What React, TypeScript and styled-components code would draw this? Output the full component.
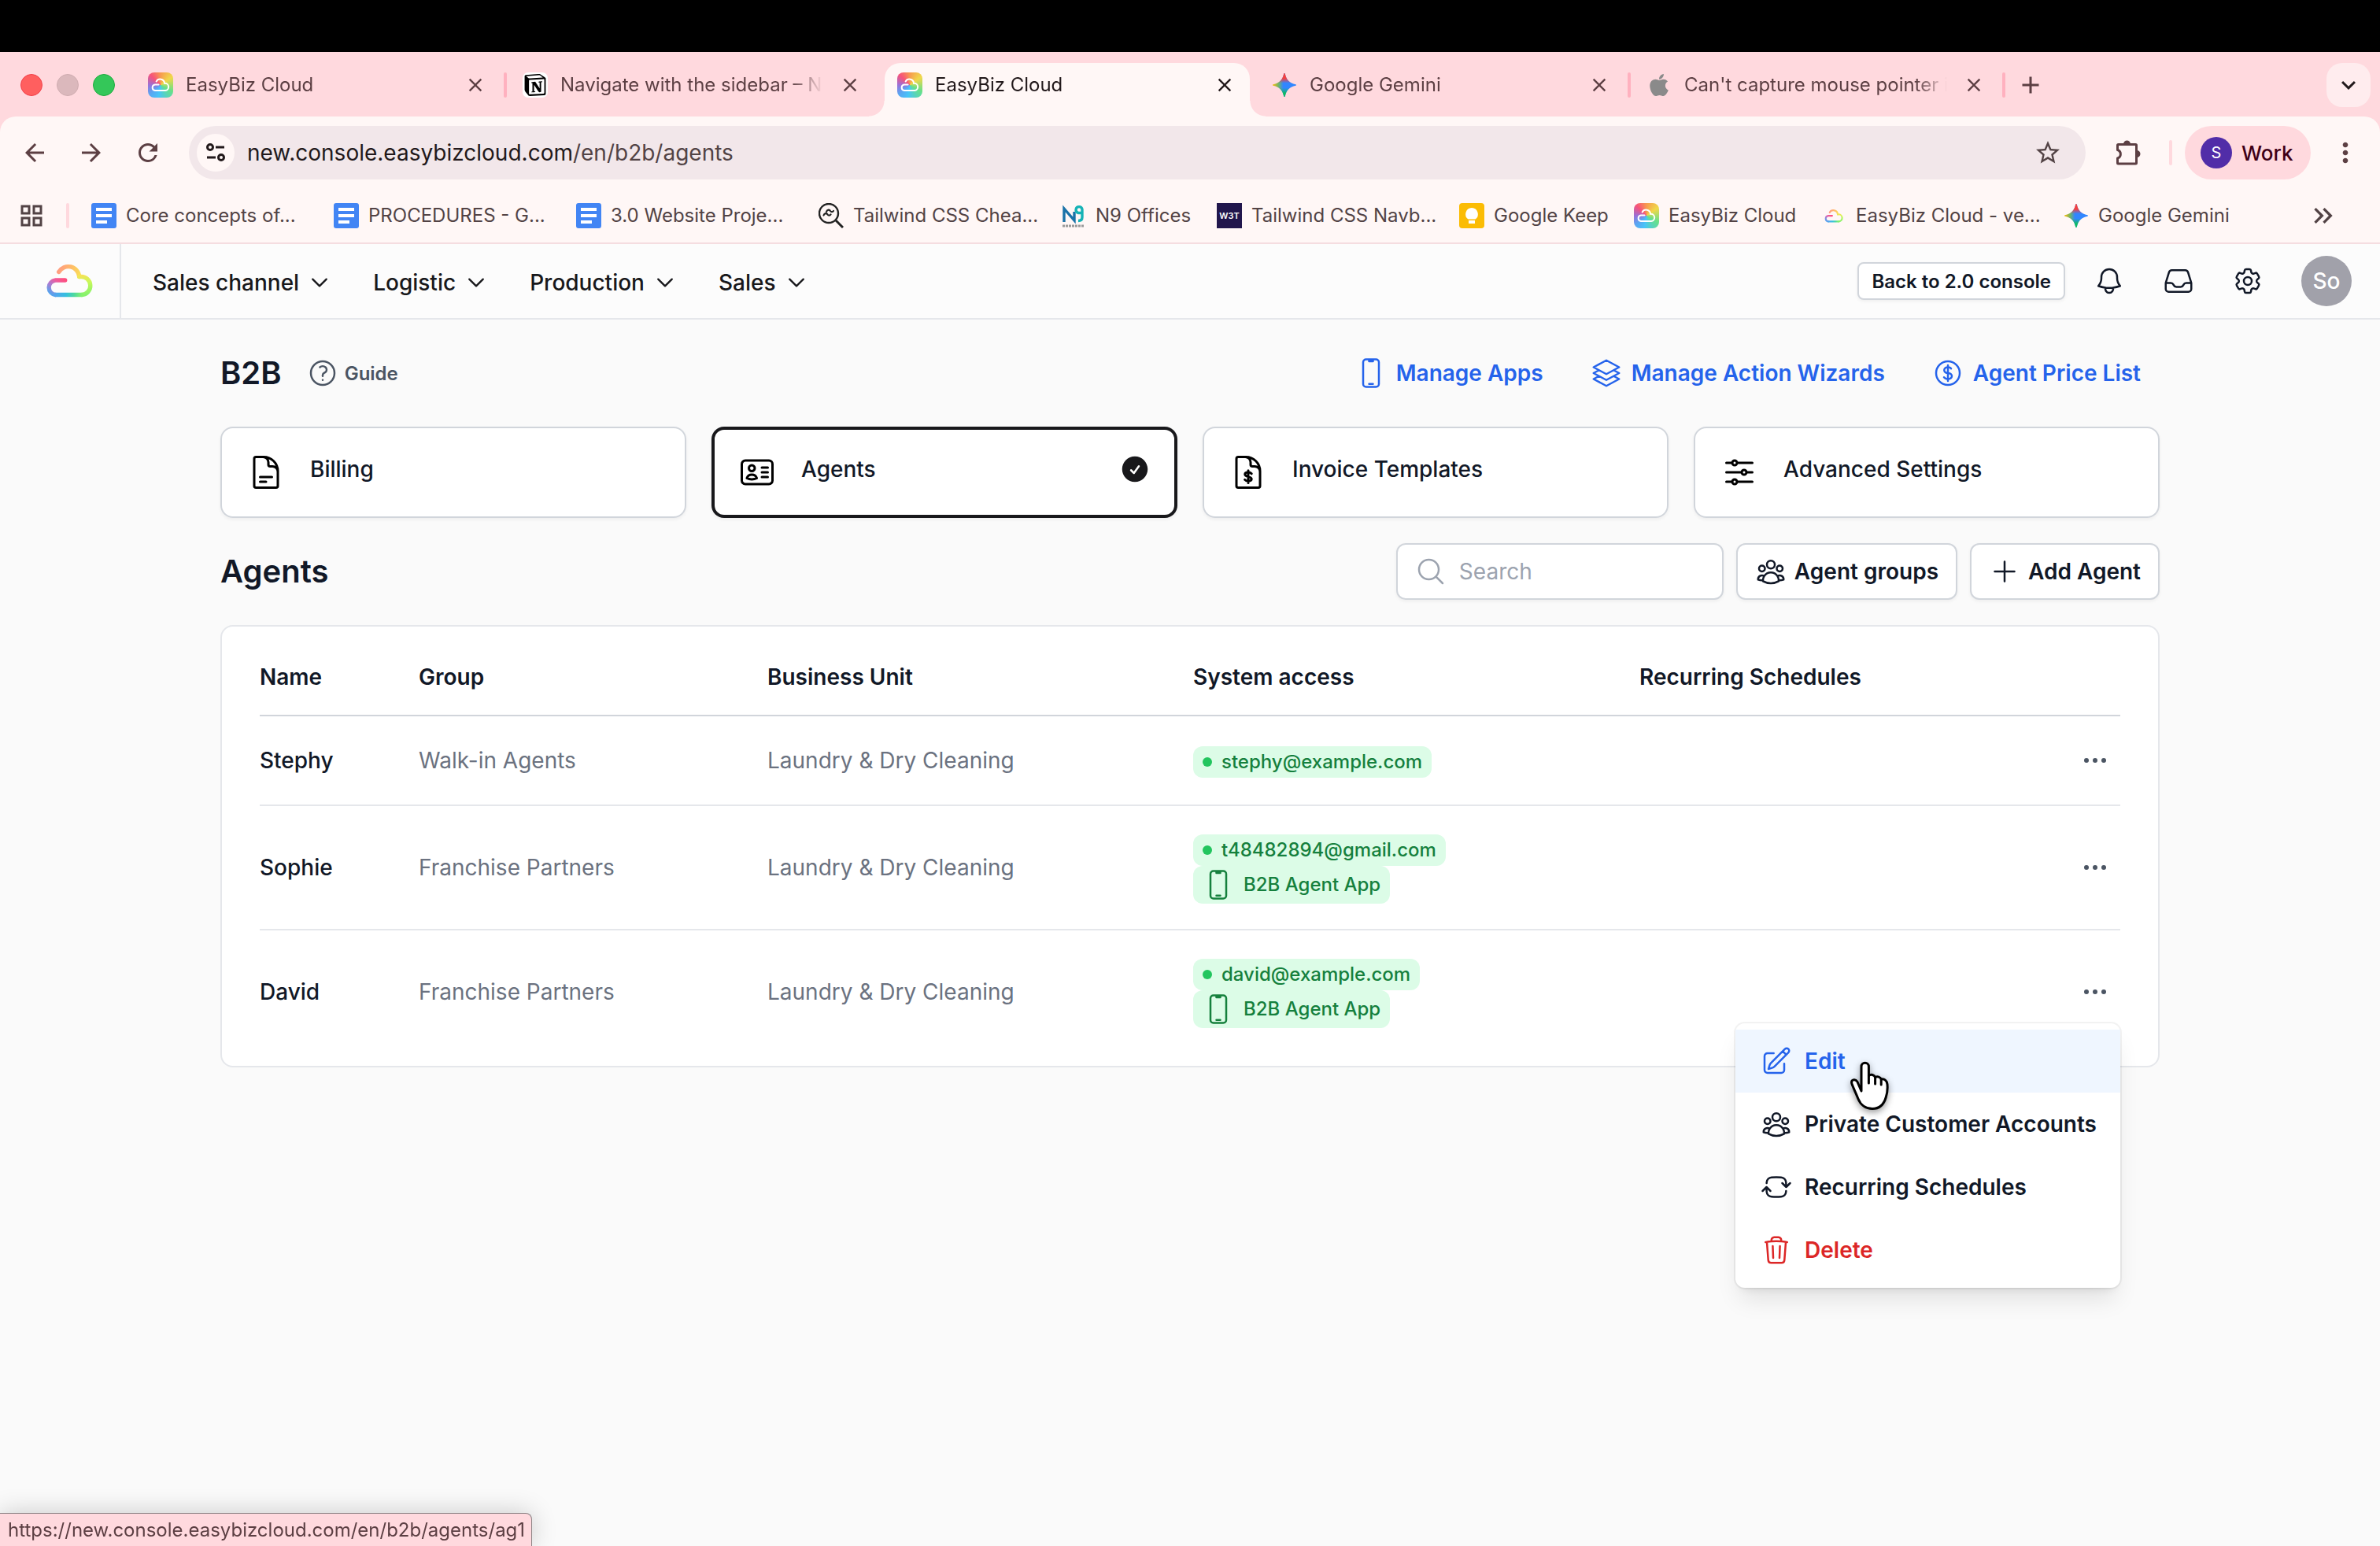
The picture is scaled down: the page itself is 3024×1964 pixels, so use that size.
import React from 'react';
import styled, { createGlobalStyle, css } from 'styled-components';
import {
  HiCheckCircle,
  HiOutlineAdjustmentsHorizontal,
  HiOutlineArrowPathRoundedSquare,
  HiOutlineBell,
  HiOutlineChevronDown,
  HiOutlineCog6Tooth,
  HiOutlineCurrencyDollar,
  HiOutlineDevicePhoneMobile,
  HiOutlineDocumentText,
  HiOutlineIdentification,
  HiOutlineInbox,
  HiOutlineMagnifyingGlass,
  HiOutlinePencilSquare,
  HiOutlinePlus,
  HiOutlineQuestionMarkCircle,
  HiOutlineSquare3Stack3D,
  HiOutlineTrash,
  HiOutlineUserGroup,
} from 'react-icons/hi2';
import {
  MdAdd,
  MdArrowBack,
  MdArrowForward,
  MdClose,
  MdKeyboardArrowDown,
  MdKeyboardDoubleArrowRight,
  MdMoreVert,
  MdOutlineGridView,
  MdRefresh,
  MdStarBorder,
} from 'react-icons/md';
import { FaApple } from 'react-icons/fa';
import { SiNotion } from 'react-icons/si';

const color = {
  strip: '#ffd9de',
  toolbar: '#fff7f6',
  field: '#f2e7ea',
  tabText: '#5c3f43',
  chromeText: '#524345',
  chromeInk: '#22191b',
  ink: '#111827',
  muted: '#6b7280',
  line: '#e5e7eb',
  border: '#d1d5db',
  blue: '#2563eb',
  red: '#dc2626',
  green: '#15803d',
};

const GlobalStyle = createGlobalStyle`
  *, *::before, *::after { box-sizing: border-box; }
  body {
    margin: 0;
    background: #fafafa;
    font-family: Inter, "Liberation Sans", sans-serif;
    -webkit-font-smoothing: antialiased;
  }
  button, input { font: inherit; color: inherit; }
  button { border: 0; padding: 0; background: none; cursor: pointer; }
  a { color: inherit; text-decoration: none; }
  svg { flex: none; display: block; }
`;

/* ---------- browser frame ---------- */

const Screen = styled.div`
  display: flex;
  flex-direction: column;
  min-height: 100vh;
`;

const MenuBarGap = styled.div`
  height: 66px;
  background: #000;
`;

const Browser = styled.div`
  background: ${color.strip};
`;

const TabStrip = styled.div`
  display: flex;
  align-items: flex-end;
  height: 82px;
  padding: 0 12px 0 26px;
`;

const Lights = styled.div`
  display: flex;
  gap: 18px;
  align-items: center;
  height: 68px;
  padding-bottom: 12px;
  margin-right: 26px;
`;

const Light = styled.span<{ $fill: string; $edge: string }>`
  width: 28px;
  height: 28px;
  border-radius: 50%;
  background: ${(p) => p.$fill};
  border: 1px solid ${(p) => p.$edge};
`;

const Tab = styled.div<{ $active?: boolean }>`
  position: relative;
  display: flex;
  align-items: center;
  gap: 16px;
  width: 464px;
  height: 68px;
  padding: 0 18px 12px 16px;
  color: ${color.tabText};
  ${(p) =>
    p.$active &&
    css`
      color: ${color.chromeInk};
      background: ${color.toolbar};
      border-radius: 20px 20px 0 0;
      &::before,
      &::after {
        content: '';
        position: absolute;
        bottom: 0;
        width: 20px;
        height: 20px;
      }
      &::before {
        left: -20px;
        background: radial-gradient(circle at 0 0, transparent 19px, ${color.toolbar} 20px);
      }
      &::after {
        right: -20px;
        background: radial-gradient(circle at 100% 0, transparent 19px, ${color.toolbar} 20px);
      }
    `}
`;

const TabTitle = styled.button`
  flex: 1;
  min-width: 0;
  margin-right: 4px;
  overflow: hidden;
  white-space: nowrap;
  text-align: left;
  font-size: 24px;
  line-height: 32px;
  mask-image: linear-gradient(to right, #000 calc(100% - 40px), transparent);
`;

const TabGap = styled.span<{ $line?: boolean }>`
  flex: none;
  width: 4px;
  height: 32px;
  margin: 0 4px 24px;
  border-radius: 2px;
  background: ${(p) => (p.$line ? '#ffb1bf' : 'transparent')};
`;

const IconButton = styled.button`
  flex: none;
  display: grid;
  place-items: center;
  color: inherit;
`;

const NewTab = styled(IconButton)`
  height: 68px;
  padding: 0 0 12px 10px;
  color: ${color.tabText};
`;

const TabSearch = styled(IconButton)`
  width: 56px;
  height: 56px;
  margin: 0 0 12px auto;
  border-radius: 20px;
  background: #ffecee;
  color: ${color.chromeInk};
`;

const Toolbar = styled.div`
  display: flex;
  align-items: center;
  height: 92px;
  padding: 0 24px 0 26px;
  border-radius: 20px 20px 0 0;
  background: ${color.toolbar};
  color: ${color.tabText};
`;

const NavButtons = styled.div`
  display: flex;
  gap: 36px;
  margin-right: 34px;
`;

const AddressField = styled.div`
  flex: 1;
  display: flex;
  align-items: center;
  height: 68px;
  padding: 0 30px 0 10px;
  margin-right: 34px;
  border-radius: 34px;
  background: ${color.field};
  color: ${color.chromeText};
`;

const SiteInfo = styled(IconButton)`
  width: 48px;
  height: 48px;
  border-radius: 50%;
  background: ${color.toolbar};
  color: ${color.chromeInk};
`;

const Address = styled.div`
  flex: 1;
  margin-left: 16px;
  font-size: 28px;
  line-height: 36px;
  outline: none;
`;

const Host = styled.span`
  color: ${color.chromeInk};
`;

const Rule = styled.span`
  flex: none;
  width: 4px;
  height: 32px;
  border-radius: 2px;
  background: ${color.strip};
`;

const ProfileButton = styled.button`
  display: flex;
  align-items: center;
  gap: 12px;
  width: 160px;
  height: 68px;
  padding: 0 20px;
  margin: 0 24px 0 16px;
  border-radius: 34px;
  background: ${color.strip};
  color: #3f0016;
  font-size: 26px;
  font-weight: 500;
`;

const ProfileInitial = styled.span`
  flex: none;
  width: 40px;
  height: 40px;
  border-radius: 50%;
  background: #512da8;
  color: #fff;
  font-size: 20px;
  font-weight: 400;
  line-height: 40px;
  text-align: center;
`;

const ExtensionSlot = styled.div`
  margin-right: 32px;
`;

const BookmarkBar = styled.nav`
  display: flex;
  align-items: center;
  height: 70px;
  padding: 0 52px 0 22px;
  border-bottom: 2px solid #f5dde0;
  background: ${color.toolbar};
  color: ${color.chromeText};
`;

const GridSlot = styled.div`
  margin-right: 26px;
`;

const BookmarkList = styled.div`
  flex: 1;
  display: flex;
  margin-left: 28px;
`;

const Bookmark = styled.a<{ $width: number }>`
  display: flex;
  align-items: center;
  gap: 12px;
  width: ${(p) => p.$width}px;
  font-size: 24px;
  line-height: 32px;
  white-space: nowrap;
`;

const StatusBubble = styled.div`
  position: fixed;
  left: 0;
  bottom: 0;
  height: 42px;
  padding: 0 8px 0 10px;
  border-top: 1px solid #8d8385;
  border-right: 1px solid #8d8385;
  border-radius: 0 8px 0 0;
  background: ${color.strip};
  box-shadow: 0 0 32px rgba(0, 0, 0, 0.2);
  color: ${color.tabText};
  font-size: 24px;
  line-height: 42px;
`;

/* ---------- site pictures ---------- */

const AppBadge = styled.span`
  flex: none;
  display: grid;
  place-items: center;
  width: 32px;
  height: 32px;
  border-radius: 8px;
  background: conic-gradient(
    #f79a4f 0deg,
    #f0d84a 55deg,
    #66e08a 120deg,
    #48c4f8 190deg,
    #5aa6f2 230deg,
    #9a70d8 270deg,
    #f7527a 315deg,
    #f79a4f 360deg
  );
`;

const NotionTile = styled.span`
  flex: none;
  display: grid;
  place-items: center;
  width: 32px;
  height: 32px;
  border-radius: 7px;
  background: #fff;
  color: #000;
`;

const W3Tile = styled.span`
  flex: none;
  width: 32px;
  height: 32px;
  background: #21164c;
  color: #fff;
  font-size: 11px;
  font-weight: 600;
  line-height: 32px;
  text-align: center;
`;

function AppFavicon() {
  return (
    <AppBadge>
      <svg width="24" height="18" viewBox="0 0 60 44" fill="none" stroke="#fff" strokeWidth="5" strokeLinecap="round">
        <path d="M24 21H12.500A9.300 9.300 0 0 0 12.500 39.500H45A11.500 11.500 0 0 0 42.700 16.500A14 14 0 0 0 16.700 10.500" />
      </svg>
    </AppBadge>
  );
}

function CloudLogo({ width, id, inset = 0 }: { width: number; id: string; inset?: number }) {
  return (
    <svg
      width={width}
      height={Math.round((width * 44) / 60)}
      viewBox={`${-inset} ${-inset} ${60 + inset * 2} ${44 + inset * 2}`}
      fill="none"
      strokeWidth="5.400"
      strokeLinecap="round"
      aria-hidden="true"
    >
      <defs>
        <linearGradient id={`${id}-left`} gradientUnits="userSpaceOnUse" x1="25" y1="20" x2="10" y2="41">
          <stop offset="0" stopColor="#ff4d7c" />
          <stop offset="0.300" stopColor="#f05c9c" />
          <stop offset="0.600" stopColor="#b07ad0" />
          <stop offset="1" stopColor="#55a4ee" />
        </linearGradient>
        <linearGradient id={`${id}-base`} gradientUnits="userSpaceOnUse" x1="12" y1="40" x2="46" y2="40">
          <stop offset="0" stopColor="#55a4ee" />
          <stop offset="0.400" stopColor="#35bfe0" />
          <stop offset="0.700" stopColor="#4cd8a0" />
          <stop offset="1" stopColor="#86f26c" />
        </linearGradient>
        <linearGradient id={`${id}-right`} gradientUnits="userSpaceOnUse" x1="48" y1="40" x2="44" y2="15">
          <stop offset="0" stopColor="#86f26c" />
          <stop offset="0.600" stopColor="#c8f85a" />
          <stop offset="1" stopColor="#f6e356" />
        </linearGradient>
        <linearGradient id={`${id}-top`} gradientUnits="userSpaceOnUse" x1="43" y1="14" x2="17" y2="8">
          <stop offset="0" stopColor="#fbdc58" />
          <stop offset="0.500" stopColor="#ffb86a" />
          <stop offset="1" stopColor="#ff9f80" />
        </linearGradient>
      </defs>
      <path stroke={`url(#${id}-top)`} d="M16.700 10.500A14 14 0 0 1 42.700 16.500" />
      <path stroke={`url(#${id}-right)`} d="M42.700 16.500H44.500A11.500 11.500 0 0 1 46 39.500" />
      <path stroke={`url(#${id}-left)`} d="M24.700 21H12.500A9.300 9.300 0 0 0 12.500 39.500" />
      <path stroke={`url(#${id}-base)`} d="M12.500 39.500 46 39.510" />
    </svg>
  );
}

function GeminiMark({ id }: { id: string }) {
  return (
    <svg width="32" height="32" viewBox="0 0 32 32" aria-hidden="true">
      <defs>
        <linearGradient id={`${id}-a`} x1="0" y1="0.500" x2="1" y2="0.500">
          <stop offset="0" stopColor="#fbbc04" />
          <stop offset="0.250" stopColor="#6fb56a" />
          <stop offset="0.450" stopColor="#3186ff" />
          <stop offset="1" stopColor="#3186ff" />
        </linearGradient>
        <linearGradient id={`${id}-b`} x1="0" y1="0" x2="0" y2="1">
          <stop offset="0" stopColor="#f4403f" />
          <stop offset="0.220" stopColor="#f4403f" />
          <stop offset="0.420" stopColor="#f4403f" stopOpacity="0" />
          <stop offset="0.620" stopColor="#0ebc5f" stopOpacity="0" />
          <stop offset="0.850" stopColor="#0ebc5f" />
        </linearGradient>
      </defs>
      {['a', 'b'].map((k) => (
        <path
          key={k}
          fill={`url(#${id}-${k})`}
          d="M16 1c.4 0 .7.300.8.700C18.500 9.500 22.500 13.500 30.300 15.200c.9.200.9 1.400 0 1.600C22.500 18.500 18.500 22.500 16.800 30.300c-.2.900-1.400.900-1.600 0C13.500 22.500 9.500 18.500 1.700 16.800c-.9-.2-.9-1.400 0-1.600C9.500 13.500 13.500 9.500 15.200 1.700c.1-.4.4-.7.8-.7Z"
        />
      ))}
    </svg>
  );
}

function DocsMark() {
  return (
    <svg width="32" height="32" viewBox="0 0 32 32" aria-hidden="true">
      <rect width="32" height="32" rx="3" fill="#4285f4" />
      <path d="M6 6h20v4H6zM6 14h20v4H6zM6 22h14v4H6z" fill="#fff" />
    </svg>
  );
}

function KeepMark() {
  return (
    <svg width="32" height="32" viewBox="0 0 32 32" aria-hidden="true">
      <rect width="32" height="32" rx="4" fill="#fbbc04" />
      <path d="M16 6a8 8 0 0 0-4.500 14.500h9A8 8 0 0 0 16 6ZM12 22h8v4h-8z" fill="#fff" />
    </svg>
  );
}

function CheatSheetMark() {
  return (
    <svg width="32" height="32" viewBox="0 0 32 32" fill="none" stroke="#222" aria-hidden="true">
      <circle cx="13" cy="13" r="12" strokeWidth="2.400" />
      <path d="m22 22 9 9" strokeWidth="3" />
      <path
        d="M10 11c1-3 4-3 5-1 1 1.500 3 1.500 4 0M6.500 15.500c1-3 4-3 5-1 1 1.500 3 1.500 4 0"
        strokeWidth="2.200"
        strokeLinecap="round"
      />
    </svg>
  );
}

function OfficesMark() {
  return (
    <svg width="32" height="32" viewBox="0 0 32 32" fill="none" aria-hidden="true">
      <path d="M4 24V7l13 15V11" stroke="#1a72a8" strokeWidth="3.400" />
      <path d="M27 12.500h-5a4 4 0 1 1 5-4.500v10c0 3-2 4.500-5 4.500" stroke="#16b3b6" strokeWidth="3.400" />
      <path d="M2 29h28" stroke="#999" strokeWidth="3" strokeDasharray="3 1" />
    </svg>
  );
}

function SiteControlsIcon() {
  return (
    <svg width="28" height="28" viewBox="0 0 28 28" fill="none" stroke="currentColor" strokeWidth="3" aria-hidden="true">
      <circle cx="7" cy="7" r="3.500" />
      <path d="M14 7h11M3 20h11" />
      <circle cx="21" cy="20" r="3.500" />
    </svg>
  );
}

function ExtensionIcon() {
  return (
    <svg width="40" height="40" viewBox="0 0 40 40" fill="none" stroke="currentColor" strokeWidth="3" aria-hidden="true">
      <path
        strokeLinejoin="round"
        d="M7.500 9.500h22a1 1 0 0 1 1 1v22.500a1 1 0 0 1-1 1h-22a1 1 0 0 1-1-1V27a5.500 5.500 0 0 0 0-10.500v-6a1 1 0 0 1 1-1Z"
      />
      <path stroke="none" fill="currentColor" d="M14 9a4.500 4.500 0 0 1 9 0ZM31 17a4.500 4.500 0 0 1 0 9Z" />
    </svg>
  );
}

/* ---------- application header ---------- */

const AppHeader = styled.header`
  display: flex;
  align-items: stretch;
  height: 96px;
  border-bottom: 2px solid ${color.line};
  background: #fcfcfc;
`;

const LogoLink = styled.a`
  display: flex;
  align-items: center;
  padding: 0 34px 0 58px;
  border-right: 2px solid ${color.line};
`;

const MainNav = styled.nav`
  display: flex;
  align-items: center;
  gap: 54px;
  margin-left: 40px;
  padding-top: 4px;
`;

const NavItem = styled.button`
  display: flex;
  align-items: center;
  gap: 12px;
  color: #18181b;
  font-size: 28px;
  font-weight: 500;
  line-height: 40px;
`;

const HeaderActions = styled.div`
  display: flex;
  align-items: center;
  gap: 48px;
  margin-left: auto;
  padding-right: 36px;
  color: ${color.ink};
`;

const BackButton = styled.button`
  height: 48px;
  padding: 0 16px;
  margin-right: -12px;
  border: 2px solid ${color.border};
  border-radius: 8px;
  background: #fff;
  box-shadow: 0 2px 4px rgba(0, 0, 0, 0.05);
  font-size: 24px;
  font-weight: 600;
`;

const Avatar = styled.button`
  width: 64px;
  height: 64px;
  border-radius: 50%;
  background: #a1a1aa;
  color: #fff;
  font-size: 28px;
  font-weight: 500;
`;

/* ---------- page ---------- */

const Page = styled.main`
  width: 100%;
  max-width: 2560px;
  margin: 0 auto;
  padding: 44px 48px 64px;
  color: ${color.ink};
`;

const TitleRow = styled.div`
  display: flex;
  align-items: center;
  justify-content: space-between;
  height: 48px;
  padding-right: 24px;
`;

const TitleGroup = styled.div`
  display: flex;
  align-items: center;
  gap: 32px;
`;

const Heading = styled.h1`
  margin: 0;
  font-size: 40px;
  font-weight: 600;
  line-height: 56px;
`;

const SubHeading = styled(Heading).attrs({ as: 'h2' })``;

const GuideLink = styled.a`
  display: flex;
  align-items: center;
  gap: 8px;
  color: #4b5563;
  font-size: 24px;
  font-weight: 600;
`;

const QuickLinks = styled.div`
  display: flex;
  gap: 60px;
`;

const QuickLink = styled.a`
  display: flex;
  align-items: center;
  gap: 12px;
  color: ${color.blue};
  font-size: 28px;
  font-weight: 600;
  line-height: 40px;
`;

const Sections = styled.nav`
  display: grid;
  grid-template-columns: repeat(4, 1fr);
  gap: 32px;
  margin: 44px 0 32px;
`;

const SectionCard = styled.a<{ $active?: boolean }>`
  display: flex;
  align-items: flex-start;
  gap: 32px;
  padding: 34px;
  border-radius: 16px;
  background: #fff;
  box-shadow:
    inset 0 0 0 ${(p) => (p.$active ? `4px #18181b` : `2px ${color.border}`)},
    0 2px 4px rgba(0, 0, 0, 0.05);
`;

const SectionIcon = styled.span`
  color: #000;
`;

const SectionLabel = styled.span`
  flex: 1;
  font-size: 28px;
  font-weight: 500;
  line-height: 40px;
`;

const SectionCheck = styled.span`
  color: #18181b;
`;

const ListBar = styled.div`
  display: flex;
  align-items: center;
  justify-content: space-between;
  height: 72px;
`;

const ListActions = styled.div`
  display: flex;
  gap: 16px;
`;

const fieldBox = css`
  display: flex;
  align-items: center;
  gap: 10px;
  height: 72px;
  padding: 0 22px;
  border: 2px solid ${color.border};
  border-radius: 12px;
  background: #fff;
  box-shadow: 0 2px 4px rgba(0, 0, 0, 0.05);
  font-size: 28px;
`;

const SearchBox = styled.label`
  ${fieldBox}
  gap: 16px;
  width: 416px;
  color: #9ca3af;
`;

const SearchInput = styled.input`
  flex: 1;
  min-width: 0;
  padding: 0;
  border: 0;
  outline: none;
  background: none;
  color: ${color.ink};
  &::placeholder {
    color: #9ca3af;
    opacity: 1;
  }
`;

const ActionButton = styled.button`
  ${fieldBox}
  font-weight: 600;
`;

const TablePanel = styled.section`
  margin-top: 32px;
  padding: 16px 48px;
  border: 2px solid ${color.line};
  border-radius: 16px;
  background: #fff;
`;

const AgentTable = styled.table`
  width: 100%;
  table-layout: fixed;
  border-collapse: separate;
  border-spacing: 0;
  font-size: 28px;
  line-height: 48px;
  text-align: left;
`;

const Column = styled.col<{ $width?: number }>`
  width: ${(p) => (p.$width ? `${p.$width}px` : 'auto')};
`;

const HeadCell = styled.th`
  padding: 24px 0;
  border-bottom: 2px solid ${color.border};
  font-weight: 600;
`;

const Row = styled.tr`
  &:not(:last-child) > * {
    border-bottom: 2px solid ${color.line};
  }
`;

const Cell = styled.td`
  padding: 32px 0;
  color: ${color.muted};
  vertical-align: middle;
`;

const NameCell = styled.th`
  padding: 32px 0;
  font-weight: 500;
`;

const AccessCell = styled(Cell)`
  padding-top: 36px;
`;

const ActionCell = styled(Cell)`
  padding: 0;
`;

const BadgeStack = styled.div`
  display: flex;
  flex-direction: column;
  align-items: flex-start;
`;

const Badge = styled.span<{ $tall?: boolean }>`
  display: flex;
  align-items: center;
  gap: 12px;
  height: ${(p) => (p.$tall ? 48 : 40)}px;
  padding: 0 12px;
  border-radius: 12px;
  background: #dcfce7;
  color: ${color.green};
  font-size: 24px;
  font-weight: 500;
`;

const Dot = styled.span`
  width: 12px;
  height: 12px;
  border-radius: 50%;
  background: #22c55e;
`;

const MenuAnchor = styled.div`
  position: relative;
  width: 64px;
  margin-left: auto;
`;

const DotsButton = styled(IconButton)`
  width: 64px;
  height: 80px;
  color: #4b5563;
`;

const Menu = styled.div`
  position: absolute;
  top: 100%;
  right: 0;
  z-index: 1;
  display: flex;
  flex-direction: column;
  padding: 8px 0;
  border-radius: 12px;
  background: #fff;
  box-shadow:
    0 0 0 2px rgba(0, 0, 0, 0.05),
    0 20px 30px -6px rgba(0, 0, 0, 0.1),
    0 8px 12px -8px rgba(0, 0, 0, 0.1);
`;

const MenuItem = styled.button<{ $tone?: string; $hover?: boolean }>`
  position: relative;
  display: flex;
  align-items: center;
  gap: 16px;
  height: 80px;
  padding: 0 30px 0 32px;
  background: ${(p) => (p.$hover ? '#eff6ff' : 'transparent')};
  color: ${(p) => p.$tone ?? color.ink};
  font-size: 28px;
  font-weight: 600;
  white-space: nowrap;
`;

const Pointer = styled.svg`
  position: absolute;
  left: 142px;
  top: 36px;
  z-index: 2;
  overflow: visible;
  filter: drop-shadow(0 3px 4px rgba(0, 0, 0, 0.4));
`;

function InvoiceIcon() {
  return (
    <svg
      width="48"
      height="48"
      viewBox="0 0 24 24"
      fill="none"
      stroke="currentColor"
      strokeWidth="1.500"
      strokeLinecap="round"
      strokeLinejoin="round"
      aria-hidden="true"
    >
      <path d="M19.500 11.625a3.375 3.375 0 0 0-3.375-3.375h-1.500A1.125 1.125 0 0 1 13.500 7.125v-1.500a3.375 3.375 0 0 0-3.375-3.375H5.625c-.621 0-1.125.504-1.125 1.125v17.250c0 .621.504 1.125 1.125 1.125h12.750c.621 0 1.125-.504 1.125-1.125V11.250a9 9 0 0 0-9-9" />
      <path d="M12 10.900v7.800M14.100 12.900c-.5-.6-1.200-.9-2.100-.9-1.200 0-2.100.5-2.100 1.300s.8 1.200 2.100 1.500 2.100.7 2.100 1.500-.9 1.300-2.100 1.300c-.9 0-1.700-.3-2.200-.9" />
    </svg>
  );
}

function DotsIcon() {
  return (
    <svg width="40" height="40" viewBox="0 0 40 40" fill="currentColor" aria-hidden="true">
      <circle cx="9" cy="20" r="3" />
      <circle cx="20" cy="20" r="3" />
      <circle cx="31" cy="20" r="3" />
    </svg>
  );
}

function HandPointer() {
  return (
    <Pointer width="56" height="70" viewBox="0 0 56 70" fill="#fff" stroke="#000" strokeWidth="3" aria-hidden="true">
      <path
        strokeLinejoin="round"
        d="M18 42V11a4.700 4.700 0 0 1 9.400 0v11.500c3-2.500 7-1 8.200 2 3-1.500 6.500-.5 7.600 2.500 4-.7 7.300 1.500 7.800 6.500.5 6 0 11.500-1.800 16.500-2.500 9-8.500 14.500-17.200 14.500-8.500 0-15-5-18-12.500C11 44.500 8 38.500 5.800 32.500c-1.200-5 4.200-6.500 7-2.500L18 42Z"
      />
      <path strokeLinecap="round" d="M27.400 22.500V32M35.600 24.500V33M43.200 27V34" />
    </Pointer>
  );
}

/* ---------- data ---------- */

const tabs = [
  { title: 'EasyBiz Cloud', icon: <AppFavicon />, line: true },
  {
    title: 'Navigate with the sidebar – N',
    icon: (
      <NotionTile>
        <SiNotion size={28} />
      </NotionTile>
    ),
  },
  { title: 'EasyBiz Cloud', icon: <AppFavicon />, active: true },
  { title: 'Google Gemini', icon: <GeminiMark id="tab-gem" />, line: true },
  { title: "Can't capture mouse pointer i", icon: <FaApple size={32} color="#8a8a8a" />, line: true },
];

const bookmarks = [
  { title: 'Core concepts of...', icon: <DocsMark />, width: 308 },
  { title: 'PROCEDURES - G...', icon: <DocsMark />, width: 308 },
  { title: '3.0 Website Proje...', icon: <DocsMark />, width: 308 },
  { title: 'Tailwind CSS Chea...', icon: <CheatSheetMark />, width: 308 },
  { title: 'N9 Offices', icon: <OfficesMark />, width: 198 },
  { title: 'Tailwind CSS Navb...', icon: <W3Tile>W3T</W3Tile>, width: 308 },
  { title: 'Google Keep', icon: <KeepMark />, width: 222 },
  { title: 'EasyBiz Cloud', icon: <AppFavicon />, width: 238 },
  { title: 'EasyBiz Cloud - ve...', icon: <CloudLogo width={32} id="bm-cloud" inset={7} />, width: 308 },
  { title: 'Google Gemini', icon: <GeminiMark id="bm-gem" />, width: 212 },
];

const sections = [
  { label: 'Billing', icon: <HiOutlineDocumentText size={48} /> },
  { label: 'Agents', icon: <HiOutlineIdentification size={48} />, active: true },
  { label: 'Invoice Templates', icon: <InvoiceIcon /> },
  { label: 'Advanced Settings', icon: <HiOutlineAdjustmentsHorizontal size={48} /> },
];

const agents = [
  { name: 'Stephy', group: 'Walk-in Agents', email: 'stephy@example.com', app: false },
  { name: 'Sophie', group: 'Franchise Partners', email: 't48482894@gmail.com', app: true },
  { name: 'David', group: 'Franchise Partners', email: 'david@example.com', app: true, menu: true },
];

function AgentMenu() {
  return (
    <Menu>
      <MenuItem $hover $tone={color.blue}>
        <HiOutlinePencilSquare size={40} />
        Edit
        <HandPointer />
      </MenuItem>
      <MenuItem>
        <HiOutlineUserGroup size={40} />
        Private Customer Accounts
      </MenuItem>
      <MenuItem>
        <HiOutlineArrowPathRoundedSquare size={40} />
        Recurring Schedules
      </MenuItem>
      <MenuItem $tone={color.red}>
        <HiOutlineTrash size={40} />
        Delete
      </MenuItem>
    </Menu>
  );
}

function BrowserFrame() {
  return (
    <Browser>
      <TabStrip>
        <Lights>
          <Light $fill="#ff5f5f" $edge="#f2404a" />
          <Light $fill="#dbb8bc" $edge="#d0adb1" />
          <Light $fill="#34c759" $edge="#1fab3f" />
        </Lights>
        {tabs.map((t, i) => (
          <React.Fragment key={i}>
            <Tab $active={t.active}>
              {t.icon}
              <TabTitle>{t.title}</TabTitle>
              <IconButton aria-label="Close tab">
                <MdClose size={28} />
              </IconButton>
            </Tab>
            <TabGap $line={t.line} />
          </React.Fragment>
        ))}
        <NewTab aria-label="New tab">
          <MdAdd size={36} />
        </NewTab>
        <TabSearch aria-label="Search tabs">
          <MdKeyboardArrowDown size={36} />
        </TabSearch>
      </TabStrip>
      <Toolbar>
        <NavButtons>
          <IconButton aria-label="Back">
            <MdArrowBack size={36} />
          </IconButton>
          <IconButton aria-label="Forward">
            <MdArrowForward size={36} />
          </IconButton>
          <IconButton aria-label="Reload">
            <MdRefresh size={36} />
          </IconButton>
        </NavButtons>
        <AddressField>
          <SiteInfo aria-label="Site information">
            <SiteControlsIcon />
          </SiteInfo>
          <Address role="textbox" aria-label="Address" contentEditable suppressContentEditableWarning spellCheck={false}>
            <Host>new.console.easybizcloud.com</Host>/en/b2b/agents
          </Address>
          <IconButton aria-label="Bookmark this page">
            <MdStarBorder size={36} />
          </IconButton>
        </AddressField>
        <ExtensionSlot>
          <IconButton aria-label="Extensions">
            <ExtensionIcon />
          </IconButton>
        </ExtensionSlot>
        <Rule />
        <ProfileButton>
          <ProfileInitial>S</ProfileInitial>
          Work
        </ProfileButton>
        <IconButton aria-label="Browser menu">
          <MdMoreVert size={40} />
        </IconButton>
      </Toolbar>
      <BookmarkBar>
        <GridSlot>
          <IconButton aria-label="Tab groups">
            <MdOutlineGridView size={36} />
          </IconButton>
        </GridSlot>
        <Rule />
        <BookmarkList>
          {bookmarks.map((b, i) => (
            <Bookmark key={i} href="#" $width={b.width}>
              {b.icon}
              {b.title}
            </Bookmark>
          ))}
        </BookmarkList>
        <IconButton aria-label="More bookmarks">
          <MdKeyboardDoubleArrowRight size={40} />
        </IconButton>
      </BookmarkBar>
    </Browser>
  );
}

export default function App() {
  return (
    <Screen>
      <GlobalStyle />
      <MenuBarGap />
      <BrowserFrame />
      <AppHeader>
        <LogoLink href="#" aria-label="EasyBiz Cloud">
          <CloudLogo width={60} id="logo" />
        </LogoLink>
        <MainNav>
          {['Sales channel', 'Logistic', 'Production', 'Sales'].map((label) => (
            <NavItem key={label}>
              {label}
              <HiOutlineChevronDown size={28} strokeWidth={2} />
            </NavItem>
          ))}
        </MainNav>
        <HeaderActions>
          <BackButton>Back to 2.0 console</BackButton>
          <IconButton aria-label="Notifications">
            <HiOutlineBell size={40} />
          </IconButton>
          <IconButton aria-label="Inbox">
            <HiOutlineInbox size={40} />
          </IconButton>
          <IconButton aria-label="Settings">
            <HiOutlineCog6Tooth size={40} />
          </IconButton>
          <Avatar aria-label="Account">So</Avatar>
        </HeaderActions>
      </AppHeader>
      <Page>
        <TitleRow>
          <TitleGroup>
            <Heading>B2B</Heading>
            <GuideLink href="#">
              <HiOutlineQuestionMarkCircle size={40} />
              Guide
            </GuideLink>
          </TitleGroup>
          <QuickLinks>
            <QuickLink href="#">
              <HiOutlineDevicePhoneMobile size={40} />
              Manage Apps
            </QuickLink>
            <QuickLink href="#">
              <HiOutlineSquare3Stack3D size={40} />
              Manage Action Wizards
            </QuickLink>
            <QuickLink href="#">
              <HiOutlineCurrencyDollar size={40} />
              Agent Price List
            </QuickLink>
          </QuickLinks>
        </TitleRow>
        <Sections>
          {sections.map((s) => (
            <SectionCard key={s.label} href="#" $active={s.active}>
              <SectionIcon>{s.icon}</SectionIcon>
              <SectionLabel>{s.label}</SectionLabel>
              {s.active && (
                <SectionCheck>
                  <HiCheckCircle size={40} />
                </SectionCheck>
              )}
            </SectionCard>
          ))}
        </Sections>
        <ListBar>
          <SubHeading>Agents</SubHeading>
          <ListActions>
            <SearchBox>
              <HiOutlineMagnifyingGlass size={40} />
              <SearchInput type="search" placeholder="Search" aria-label="Search agents" />
            </SearchBox>
            <ActionButton>
              <HiOutlineUserGroup size={40} />
              Agent groups
            </ActionButton>
            <ActionButton>
              <HiOutlinePlus size={40} />
              Add Agent
            </ActionButton>
          </ListActions>
        </ListBar>
        <TablePanel>
          <AgentTable>
            <colgroup>
              <Column $width={202} />
              <Column $width={443} />
              <Column $width={541} />
              <Column $width={567} />
              <Column />
              <Column $width={80} />
            </colgroup>
            <thead>
              <tr>
                {['Name', 'Group', 'Business Unit', 'System access', 'Recurring Schedules', ''].map((h, i) => (
                  <HeadCell key={i} scope="col">
                    {h}
                  </HeadCell>
                ))}
              </tr>
            </thead>
            <tbody>
              {agents.map((a) => (
                <Row key={a.name}>
                  <NameCell scope="row">{a.name}</NameCell>
                  <Cell>{a.group}</Cell>
                  <Cell>Laundry &amp; Dry Cleaning</Cell>
                  <AccessCell>
                    <BadgeStack>
                      <Badge>
                        <Dot />
                        {a.email}
                      </Badge>
                      {a.app && (
                        <Badge $tall>
                          <HiOutlineDevicePhoneMobile size={40} />
                          B2B Agent App
                        </Badge>
                      )}
                    </BadgeStack>
                  </AccessCell>
                  <Cell />
                  <ActionCell>
                    <MenuAnchor>
                      <DotsButton aria-label={`Actions for ${a.name}`}>
                        <DotsIcon />
                      </DotsButton>
                      {a.menu && <AgentMenu />}
                    </MenuAnchor>
                  </ActionCell>
                </Row>
              ))}
            </tbody>
          </AgentTable>
        </TablePanel>
      </Page>
      <StatusBubble>https://new.console.easybizcloud.com/en/b2b/agents/ag1</StatusBubble>
    </Screen>
  );
}
